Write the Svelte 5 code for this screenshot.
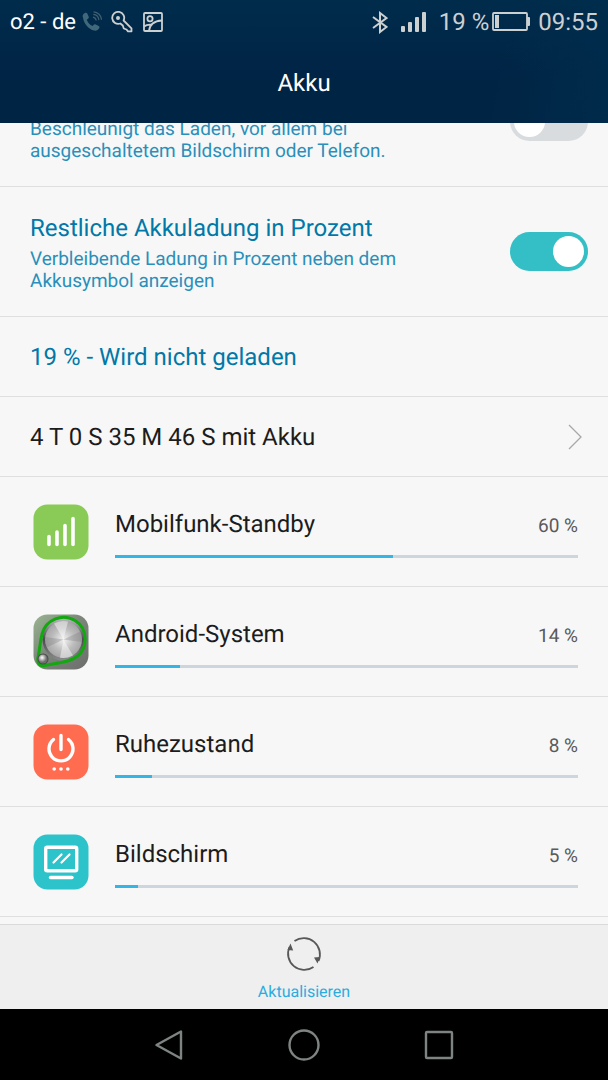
<script>
  let fastCharge = $state(false);
  let showPercent = $state(true);

  const consumers = [
    { icon: 'signal', name: 'Mobilfunk-Standby', percent: 60 },
    { icon: 'system', name: 'Android-System', percent: 14 },
    { icon: 'power', name: 'Ruhezustand', percent: 8 },
    { icon: 'screen', name: 'Bildschirm', percent: 5 }
  ];
</script>

<div class="screen">
  <header>
    <div class="status">
      <span class="carrier">o2 - de</span>
      <svg class="call" width="20" height="22" viewBox="0 0 20 22" aria-hidden="true">
        <path d="M1 6.5C0 4.500 1.500 2.500 3.500 1.800c1-.3 1.600.2 1.900 1l1.300 3c.3.9 0 1.500-.7 2l-1.200 1c1 2.800 3 5 5.700 6.300l1.200-1.300c.6-.6 1.200-.7 2-.3l3 1.600c.8.500 1 1.200.6 2-1 2-3 3-5.200 2.500C6.500 18.300 1.800 12.500 1 6.500z" fill="#40687b" />
        <path d="M11 6.200c1.800.3 2.900 1.500 3.200 3.300M11.300 3.400c3 .3 5.300 2.600 5.600 5.700M11.500.8c4.300.2 7.800 3.700 8 8" fill="none" stroke="#40606f" stroke-width="1.200" />
      </svg>
      <svg class="key" width="22" height="22" viewBox="0 0 22 22" fill="none" stroke="#cdd0d0" stroke-width="1.800" stroke-linejoin="round" aria-hidden="true">
        <path d="M12.600 9.500A6 6 0 1 0 9.300 12.500L11.800 14.500 12.800 17.500 15.500 18.500 17 20.300 20.500 20.300 20.500 17.300z" />
        <circle cx="7" cy="7" r="1.100" fill="#cdd0d0" />
      </svg>
      <svg class="photo" width="20" height="20" viewBox="0 0 20 20" fill="none" stroke="#cdd0d0" stroke-width="1.800" aria-hidden="true">
        <rect x="1" y="1" width="18" height="18" rx="1" />
        <circle cx="7" cy="6.800" r="2.600" />
        <path d="M6 19c.5-6 4.500-10 13-10.500M1 14.500c2-1.500 4-2 7-1.800" />
      </svg>
      <span class="spacer"></span>
      <svg class="bluetooth" width="16" height="23" viewBox="0 0 16 23" fill="none" stroke="#cdd0d0" stroke-width="2" aria-hidden="true">
        <path d="M1 6l13.500 10L8 21V2l6.500 5L1 17" />
      </svg>
      <svg class="bars" width="26" height="22" viewBox="0 0 26 22" fill="#cdd0d0" aria-hidden="true">
        <rect x="0" y="15" width="4" height="6" rx="1" />
        <rect x="7" y="11" width="4" height="10" rx="1" />
        <rect x="14" y="6" width="4" height="15" rx="1" />
        <rect x="21" y="1" width="4" height="20" rx="1" />
      </svg>
      <span class="level">19 %</span>
      <svg class="battery" width="38" height="20" viewBox="0 0 38 20" aria-hidden="true">
        <rect x="1" y="1" width="34" height="17" rx="1" fill="none" stroke="#cdd0d0" stroke-width="1.800" />
        <rect x="3" y="3" width="4" height="13" fill="#cdd0d0" />
        <rect x="35" y="5" width="3" height="9" rx="1" fill="#cdd0d0" />
      </svg>
      <span class="clock">09:55</span>
    </div>
    <h1>Akku</h1>
  </header>

  <main>
    <div class="list">
      <label class="row setting">
        <span class="copy end">
          <span class="sub">Beschleunigt das Laden, vor allem bei ausgeschaltetem Bildschirm oder Telefon.</span>
        </span>
        <input class="toggle" type="checkbox" bind:checked={fastCharge} />
      </label>
      <label class="row setting">
        <span class="copy">
          <span class="title">Restliche Akkuladung in Prozent</span>
          <span class="sub">Verbleibende Ladung in Prozent neben dem Akkusymbol anzeigen</span>
        </span>
        <input class="toggle" type="checkbox" bind:checked={showPercent} />
      </label>
      <div class="row line state">19 % - Wird nicht geladen</div>
      <button class="row line detail">
        <span>4 T 0 S 35 M 46 S mit Akku</span>
        <svg width="14" height="26" viewBox="0 0 14 26" fill="none" stroke="#a8a8a8" stroke-width="1.300" aria-hidden="true">
          <path d="M1 1l12 12L1 25" />
        </svg>
      </button>

      {#each consumers as item}
        <button class="row app">
          <svg class="tile" width="56" height="56" viewBox="0 0 56 56" aria-hidden="true">
            {#if item.icon === 'signal'}
              <rect x=".5" y=".5" width="55" height="55" rx="14" fill="#8aca56" />
              <path d="M16 32.500v8M24 28v12.500M32 21.500v19M40 14.500v26" stroke="#fff" stroke-width="3.600" stroke-linecap="round" />
            {:else if item.icon === 'system'}
              <defs>
                <linearGradient id="plate" x1="0" y1="0" x2="1" y2="1">
                  <stop offset="0" stop-color="#9bb591" />
                  <stop offset=".45" stop-color="#7c877a" />
                  <stop offset="1" stop-color="#6d6d6d" />
                </linearGradient>
                <linearGradient id="rim" x1="0" y1="0" x2="0" y2="1">
                  <stop offset="0" stop-color="#b8b8bc" />
                  <stop offset=".5" stop-color="#4c4c50" />
                  <stop offset="1" stop-color="#8c8c90" />
                </linearGradient>
                <radialGradient id="dial">
                  <stop offset="0" stop-color="#f2f2f2" />
                  <stop offset=".6" stop-color="#bcbcbc" />
                  <stop offset="1" stop-color="#a6a6a6" />
                </radialGradient>
                <radialGradient id="stud" cx=".4" cy=".35">
                  <stop offset="0" stop-color="#fff" />
                  <stop offset="1" stop-color="#6f6f6f" />
                </radialGradient>
              </defs>
              <rect x=".5" y=".5" width="55" height="55" rx="14" fill="url(#plate)" />
              <circle cx="30.500" cy="25.500" r="21" fill="url(#rim)" />
              <circle cx="30.500" cy="25.500" r="18.500" fill="url(#dial)" />
              <path d="M30.500 25.500L21 9.600A18.500 18.500 0 0 1 35 7.600zM30.500 25.500L40 41.400A18.500 18.500 0 0 1 27 43.700z" fill="#fff" opacity=".45" />
              <path d="M30.500 25.500L12.200 23a18.500 18.500 0 0 0 1.500 10.500zM30.500 25.500L48.800 28a18.500 18.500 0 0 0-1.500-10.500z" fill="#777" opacity=".3" />
              <path d="M9 20C13 5 30-1 42 6.500c13 8 13 27 2.500 35.500-7 6-18 6.500-33 9.500-5 1-7.500-3-6.500-8C7 34 7 28 9 20z" fill="none" stroke="#12a80f" stroke-width="3" />
              <circle cx="10" cy="45" r="5.500" fill="#4b4b4b" />
              <circle cx="10" cy="45" r="4.500" fill="url(#stud)" />
            {:else if item.icon === 'power'}
              <rect x=".5" y=".5" width="55" height="55" rx="14" fill="#ff6c50" />
              <g fill="none" stroke="#fff" stroke-width="3.400" stroke-linecap="round">
                <path d="M28 11.500v14M20.500 15.500a12 12 0 1 0 15 0" />
              </g>
              <g fill="#fff">
                <circle cx="21.200" cy="45" r="1.800" />
                <circle cx="28" cy="45" r="1.800" />
                <circle cx="34.800" cy="45" r="1.800" />
              </g>
            {:else}
              <rect x=".5" y=".5" width="55" height="55" rx="14" fill="#2cc3ca" />
              <g fill="none" stroke="#fff" stroke-linecap="round">
                <rect x="12.700" y="13.200" width="31" height="23.500" rx="1.500" stroke-width="3.400" />
                <path d="M17.500 43.500h21.500" stroke-width="3.400" />
                <path d="M20.500 28.500l8-8M28.500 28.500l8-8" stroke-width="2.200" />
              </g>
            {/if}
          </svg>
          <span class="usage">
            <span class="figures">
              <span class="name">{item.name}</span>
              <span class="percent">{item.percent} %</span>
            </span>
            <span class="track"><span class="fill" style="width: {item.percent}%"></span></span>
          </span>
        </button>
      {/each}
    </div>
  </main>

  <div class="toolbar">
    <button class="refresh">
      <svg width="36" height="36" viewBox="0 0 36 36" aria-hidden="true">
        <g fill="none" stroke="#585858" stroke-width="1.800">
          <path d="M8.500 5a16.200 16.200 0 0 1 24 20" />
          <path d="M27.500 31a16.200 16.200 0 0 1-24-20" />
        </g>
        <path d="M4.500 7.500l2.700 7-5.700-.4zM31.500 27.500l2.500-6.500-6 .4z" fill="#585858" />
      </svg>
      <span>Aktualisieren</span>
    </button>
  </div>

  <nav>
    <button aria-label="Zurück">
      <svg width="32" height="32" viewBox="0 0 32 32"><path d="M28 2.500v27L3.500 16z" /></svg>
    </button>
    <button aria-label="Startseite">
      <svg width="32" height="32" viewBox="0 0 32 32"><circle cx="16" cy="16" r="14.500" /></svg>
    </button>
    <button aria-label="Letzte Apps">
      <svg width="32" height="32" viewBox="0 0 32 32"><rect x="3" y="3" width="26" height="26" rx="1" /></svg>
    </button>
  </nav>
</div>

<style>
  :global(body) {
    margin: 0;
    background: #f7f7f7;
  }

  .screen {
    display: flex;
    flex-direction: column;
    height: 100vh;
    font-family: Roboto, "Liberation Sans", sans-serif;
    color: #1c1c1c;
    text-rendering: geometricPrecision;
  }

  button {
    margin: 0;
    padding: 0;
    border: 0;
    background: none;
    font: inherit;
    color: inherit;
    text-align: left;
    text-rendering: inherit;
    cursor: pointer;
  }

  svg {
    display: block;
    flex: none;
  }

  header {
    flex: none;
    background: linear-gradient(100deg, rgba(0, 44, 76, 0) 80%, rgba(0, 46, 78, 0.7) 100%),
      linear-gradient(#002c4c, #002445 60%, #002444);
    color: #fff;
  }

  .status {
    display: flex;
    align-items: center;
    height: 44px;
    padding: 0 10px;
    font-size: 24px;
    color: #cdd0d0;
  }

  .carrier {
    font-size: 22px;
    color: #fff;
  }

  .call {
    margin-left: 6px;
  }

  .key {
    margin-left: 9px;
  }

  .photo {
    margin-left: 10px;
  }

  .spacer {
    flex: 1;
  }

  .bars {
    margin: 0 12px 0 13px;
  }

  .battery {
    margin: 0 8px 0 3px;
  }

  h1 {
    margin: 0;
    height: 79px;
    line-height: 79px;
    font-size: 24px;
    font-weight: 400;
    text-align: center;
  }

  main {
    flex: 1;
    min-height: 0;
    overflow: hidden;
    background: #f7f7f7;
  }

  /* The list rests partly scrolled under the header. */
  .list {
    margin-top: -66px;
  }

  .row {
    display: flex;
    align-items: center;
    box-sizing: border-box;
    width: 100%;
    border-bottom: 1px solid #dfdfdf;
  }

  .setting {
    justify-content: space-between;
    height: 130px;
    padding: 0 20px 0 30px;
  }

  .copy {
    display: flex;
    flex-direction: column;
    gap: 4px;
    max-width: 370px;
  }

  .end {
    align-self: flex-end;
    padding-bottom: 24px;
  }

  .title {
    font-size: 24px;
    line-height: 32px;
    color: #0078a8;
    white-space: nowrap;
  }

  .sub {
    font-size: 19px;
    line-height: 22px;
    color: #2a8fba;
  }

  .toggle {
    appearance: none;
    flex: none;
    width: 78px;
    height: 39px;
    margin: 0;
    padding: 4px;
    box-sizing: border-box;
    border-radius: 20px;
    background: #d9dcde;
    cursor: pointer;
  }

  .toggle::before {
    content: "";
    display: block;
    width: 31px;
    height: 31px;
    border-radius: 50%;
    background: #fff;
  }

  .toggle:checked {
    background: #34bfc6;
  }

  .toggle:checked::before {
    margin-left: auto;
  }

  .line {
    justify-content: space-between;
    height: 80px;
    padding: 0 26px 0 30px;
    font-size: 24px;
  }

  .state {
    color: #0078a8;
  }

  .app {
    gap: 26px;
    height: 110px;
    padding: 0 30px 0 33px;
  }

  .usage {
    flex: 1;
    display: flex;
    flex-direction: column;
    gap: 13px;
    padding-top: 3px;
  }

  .figures {
    display: flex;
    justify-content: space-between;
    align-items: baseline;
    line-height: 32px;
  }

  .name {
    font-size: 24px;
  }

  .percent {
    font-size: 19px;
    color: #5a5a5a;
  }

  .track {
    display: block;
    height: 3px;
    background: #ccd6dc;
  }

  .fill {
    display: block;
    height: 100%;
    background: #33b5e5;
  }

  .toolbar {
    display: flex;
    justify-content: center;
    flex: none;
    box-sizing: border-box;
    height: 85px;
    border-top: 1px solid #dadada;
    background: #efefef;
  }

  .refresh {
    display: flex;
    flex-direction: column;
    align-items: center;
    gap: 10px;
    padding-top: 11px;
    font-size: 16px;
    line-height: 20px;
    color: #2bace0;
  }

  nav {
    display: flex;
    justify-content: center;
    flex: none;
    height: 71px;
    background: #000;
  }

  nav button {
    display: flex;
    align-items: center;
    justify-content: center;
    width: 135px;
  }

  nav svg {
    fill: none;
    stroke: #7e8483;
    stroke-width: 2.4;
    stroke-linejoin: round;
  }
</style>
